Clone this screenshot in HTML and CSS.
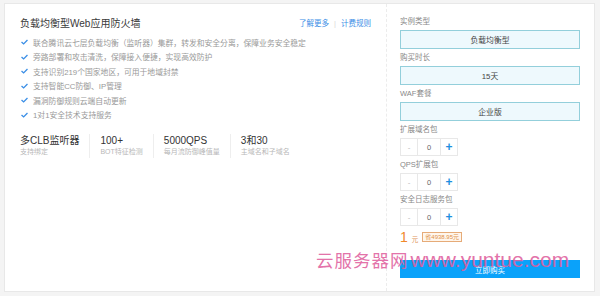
FILE: index.html
```html
<!DOCTYPE html>
<html lang="zh-CN">
<head>
<meta charset="utf-8">
<title>负载均衡型Web应用防火墙</title>
<link rel="stylesheet" href="styles.css">
</head>
<body>
<div class="card">
  <section class="main">
    <div class="head">
      <h1 class="title">负载均衡型Web应用防火墙</h1>
      <div class="links"><a class="link">了解更多</a><span class="sep">|</span><a class="link">计费规则</a></div>
    </div>
    <ul class="features">
      <li><svg class="check" viewBox="0 0 8 6"><path d="M0.6 3 L3 5.2 L7.4 0.8" /></svg>联合腾讯云七层负载均衡（监听器）集群，转发和安全分离，保障业务安全稳定</li>
      <li><svg class="check" viewBox="0 0 8 6"><path d="M0.6 3 L3 5.2 L7.4 0.8" /></svg>旁路部署和攻击清洗，保障接入便捷，实现高效防护</li>
      <li><svg class="check" viewBox="0 0 8 6"><path d="M0.6 3 L3 5.2 L7.4 0.8" /></svg>支持识别219个国家地区，可用于地域封禁</li>
      <li><svg class="check" viewBox="0 0 8 6"><path d="M0.6 3 L3 5.2 L7.4 0.8" /></svg>支持智能CC防御、IP管理</li>
      <li><svg class="check" viewBox="0 0 8 6"><path d="M0.6 3 L3 5.2 L7.4 0.8" /></svg>漏洞防御规则云端自动更新</li>
      <li><svg class="check" viewBox="0 0 8 6"><path d="M0.6 3 L3 5.2 L7.4 0.8" /></svg>1对1安全技术支持服务</li>
    </ul>
    <div class="stats">
      <div class="stat"><div class="stat-val">多CLB监听器</div><div class="stat-sub">支持绑定</div></div>
      <div class="stat"><div class="stat-val">100+</div><div class="stat-sub">BOT特征检测</div></div>
      <div class="stat"><div class="stat-val">5000QPS</div><div class="stat-sub">每月流防御峰值量</div></div>
      <div class="stat"><div class="stat-val">3和30</div><div class="stat-sub">主域名和子域名</div></div>
    </div>
  </section>
  <aside class="side">
    <div class="field">
      <div class="label">实例类型</div>
      <div class="select">负载均衡型</div>
    </div>
    <div class="field">
      <div class="label">购买时长</div>
      <div class="select">15天</div>
    </div>
    <div class="field">
      <div class="label">WAF套餐</div>
      <div class="select">企业版</div>
    </div>
    <div class="field">
      <div class="label">扩展域名包</div>
      <div class="stepper"><span class="minus">-</span><span class="value">0</span><span class="plus">+</span></div>
    </div>
    <div class="field">
      <div class="label">QPS扩展包</div>
      <div class="stepper"><span class="minus">-</span><span class="value">0</span><span class="plus">+</span></div>
    </div>
    <div class="field">
      <div class="label">安全日志服务包</div>
      <div class="stepper"><span class="minus">-</span><span class="value">0</span><span class="plus">+</span></div>
    </div>
    <div class="price">
      <span class="amount">1</span><span class="unit">元</span><span class="save">省4938.95元</span>
    </div>
    <button class="buy">立即购买</button>
  </aside>
</div>
<div class="watermark"><span class="wm-cn">云服务器网</span><span class="wm-en">www.yuntue.com</span></div>
</body>
</html>
```
FILE: styles.css
```css
* { box-sizing: border-box; }
html, body { margin: 0; }
body {
  width: 600px;
  height: 296px;
  padding: 3px 5px 4px 4px;
  background: #f4f4f4;
  font-family: "Liberation Sans", "Noto Sans CJK SC", sans-serif;
  color: #333;
  position: relative;
  overflow: hidden;
}
.card {
  display: flex;
  height: 289px;
  background: #fff;
  border: 1px solid #e8e8e8;
}
.main {
  width: 382px;
  border-right: 1px dashed #ececec;
  padding: 13px 15px 0 15px;
}
.head {
  display: flex;
  justify-content: space-between;
  align-items: center;
  height: 14px;
}
.title {
  margin: 0;
  font-size: 10px;
  font-weight: normal;
  line-height: 14px;
  color: #3a3a3a;
}
.links {
  display: flex;
  align-items: center;
  font-size: 7.5px;
  line-height: 10px;
}
.link { color: #3a8ee6; }
.sep { color: #d8d8d8; margin: 0 5px; }
.features {
  list-style: none;
  margin: 4px 0 0 0;
  padding: 0;
}
.features li {
  display: flex;
  align-items: center;
  height: 14.5px;
  font-size: 7.8px;
  color: #999;
  padding-left: 1px;
}
.check {
  width: 7px;
  height: 6px;
  margin-right: 5px;
  fill: none;
  stroke: #3a8ee6;
  stroke-width: 1.5;
}
.stats {
  display: flex;
  margin-top: 12px;
}
.stat {
  padding: 1px 10px;
  border-left: 1px solid #eeeeee;
}
.stat:first-child { padding-left: 0; border-left: none; }
.stat-val {
  font-size: 10px;
  line-height: 12px;
  color: #333;
}
.stat-sub {
  font-size: 7px;
  line-height: 10px;
  color: #b8b8b8;
}
.side {
  flex: 1;
  padding: 13px 14px 0 13px;
  display: flex;
  flex-direction: column;
}
.field { margin-bottom: 4px; }
.label {
  font-size: 7.5px;
  line-height: 10px;
  color: #888;
  margin-bottom: 3px;
}
.select {
  height: 19px;
  border: 1px solid #93cfdb;
  background: #eef9fd;
  display: flex;
  align-items: center;
  justify-content: center;
  font-size: 7.8px;
  color: #444;
}
.stepper {
  display: flex;
  width: 58px;
  height: 18px;
  border: 1px solid #e8e8e8;
}
.stepper span {
  display: flex;
  align-items: center;
  justify-content: center;
}
.minus { width: 17px; color: #bbb; font-size: 8px; border-right: 1px solid #e8e8e8; }
.value { width: 23px; color: #666; font-size: 7.5px; border-right: 1px solid #e8e8e8; }
.plus { flex: 1; color: #1e8fe0; font-size: 12px; font-weight: bold; }
.price {
  display: flex;
  align-items: center;
  height: 14px;
  margin-top: 0;
}
.amount {
  font-size: 14px;
  color: #f0892a;
  line-height: 14px;
}
.unit {
  font-size: 6.5px;
  color: #e0945a;
  margin: 3px 0 0 4px;
}
.save {
  margin-left: 4px;
  height: 10px;
  padding: 0 2px;
  border: 1px solid #e6ab78;
  background: #fff6ec;
  color: #e0914a;
  font-size: 6px;
  line-height: 8px;
}
.buy {
  margin-top: 16px;
  height: 18px;
  border: none;
  background: #0aa2fa;
  color: #fff;
  font-family: inherit;
  font-size: 7.5px;
  padding: 0;
}
.watermark {
  position: absolute;
  left: 316px;
  top: 247px;
  display: flex;
  align-items: baseline;
  color: #e0609e;
  opacity: 0.88;
  white-space: nowrap;
}
.wm-cn {
  font-family: "Noto Sans CJK SC", sans-serif;
  font-size: 17.5px;
  letter-spacing: 1px;
}
.wm-en {
  font-family: "Liberation Sans", sans-serif;
  font-size: 21px;
  margin-left: 2px;
}
```
